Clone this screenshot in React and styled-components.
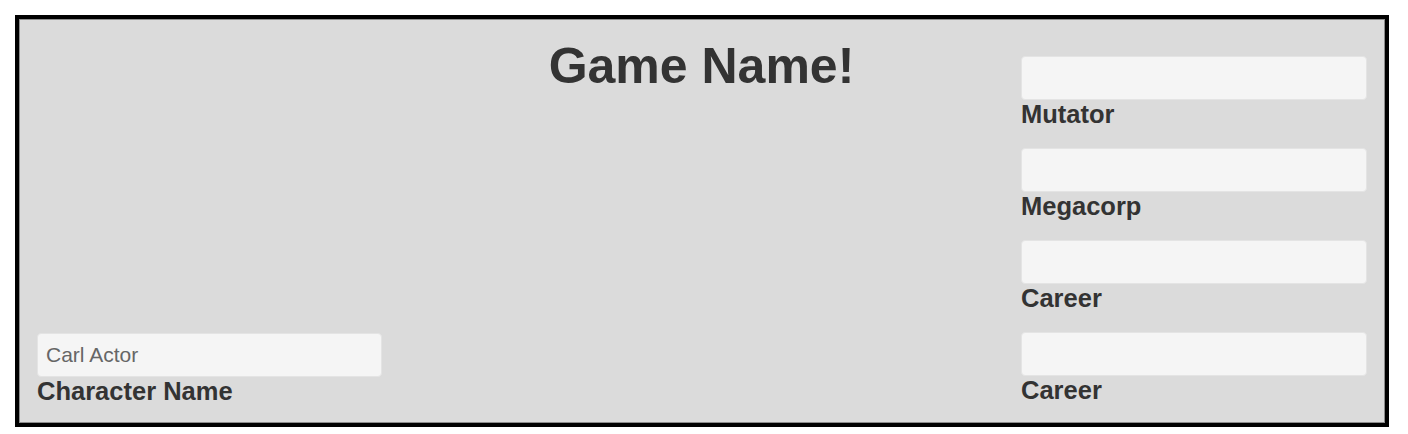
import React from 'react';
import styled, { createGlobalStyle } from 'styled-components';

const GlobalStyle = createGlobalStyle`
body {
  margin: 0;
  background: #ffffff;
  font-family: "Liberation Sans", Arial, Helvetica, sans-serif;
}
`

const Sheet = styled.div`
box-sizing: border-box;
width: 1374px;
height: 412px;
margin: 15px 0 0 15px;
border: 4px solid #000;
box-shadow: inset 0 0 0 1px #8c8c8c;
background: #dbdbdb;
padding: 18px;
display: grid;
grid-template-columns: 345px 1fr 346px;
color: #333;
`

const Side = styled.div`
display: flex;
flex-direction: column;
justify-content: ${p => (p.bottom ? 'flex-end' : 'flex-start')};
padding-top: ${p => (p.bottom ? '0' : '19px')};
gap: 20px;
`

const Title = styled.h1`
margin: 0;
padding-top: 3px;
text-align: center;
font-size: 50px;
line-height: 53px;
font-weight: bold;
color: #333;
`

const Field = styled.div`
display: flex;
flex-direction: column;
`

const Input = styled.input`
box-sizing: border-box;
width: 100%;
height: 44px;
margin: 0;
padding: 0 8px;
border: 1px solid #e4e4e4;
border-radius: 4px;
background: #f5f5f5;
font-family: "Liberation Sans", Arial, sans-serif;
font-size: 21px;
color: #666;
outline: none;
`

const Label = styled.label`
display: block;
font-size: 25.5px;
line-height: 28px;
font-weight: bold;
color: #333;
`

const rightFields = ['Mutator', 'Megacorp', 'Career', 'Career'];

const App = () => {
  return (
    <>
      <GlobalStyle />
      <Sheet>
        <Side bottom>
          <Field>
            <Input defaultValue="Carl Actor" />
            <Label>Character Name</Label>
          </Field>
        </Side>
        <Title>Game Name!</Title>
        <Side>
          {rightFields.map((name, i) => (
            <Field key={i}>
              <Input />
              <Label>{name}</Label>
            </Field>
          ))}
        </Side>
      </Sheet>
    </>
  );
};

export default App;
